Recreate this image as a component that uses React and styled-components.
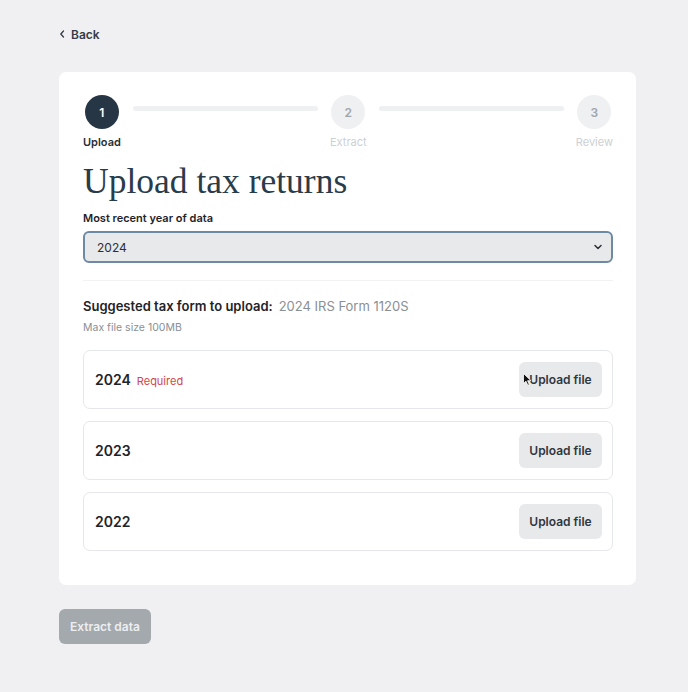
import React from "react";
import styled, { createGlobalStyle } from "styled-components";

const Global = createGlobalStyle`
  html, body { margin: 0; padding: 0; background: #f0f0f2; }
  body { font-family: Inter, "Noto Sans", sans-serif; color: #2b2f36; -webkit-font-smoothing: antialiased; }
  * { box-sizing: border-box; }
`;

const Page = styled.div`
  width: 688px;
  min-height: 692px;
  padding: 27px 52px 40px 59px;
  display: flex;
  flex-direction: column;
`;

const BackLink = styled.a`
  display: flex;
  align-items: center;
  gap: 6px;
  height: 14px;
  font-size: 12px;
  font-weight: 600;
  color: #333b45;
  text-decoration: none;
  cursor: pointer;
`;

const Card = styled.section`
  margin-top: 31px;
  background: #ffffff;
  border-radius: 7px;
  padding: 23px 23px 34px 24px;
  display: flex;
  flex-direction: column;
`;

const Stepper = styled.div`
  display: grid;
  grid-template-columns: auto 1fr auto 1fr auto;
  align-items: start;
`;

const Step = styled.div`
  display: flex;
  flex-direction: column;
  align-items: center;
  min-width: 37px;
`;

const Circle = styled.div`
  width: 34px;
  height: 34px;
  border-radius: 50%;
  display: flex;
  align-items: center;
  justify-content: center;
  font-size: 12px;
  font-weight: 600;
  background: ${(p) => (p.$active ? "#263645" : "#eff0f2")};
  color: ${(p) => (p.$active ? "#ffffff" : "#a0a5ac")};
`;

const StepLabel = styled.div`
  margin-top: 6px;
  font-size: 11px;
  line-height: 14px;
  font-weight: ${(p) => (p.$active ? 600 : 400)};
  color: ${(p) => (p.$active ? "#2b2f36" : "#cdd0d4")};
`;

const Line = styled.div`
  height: 5px;
  border-radius: 3px;
  background: #eff0f2;
  margin: 11px 12px 0 12px;
`;

const Title = styled.h1`
  margin: 11px 0 0 0;
  font-family: "Liberation Serif", "Times New Roman", serif;
  font-weight: 400;
  font-size: 35.5px;
  line-height: 42px;
  color: #2a3b4a;
`;

const FieldLabel = styled.label`
  margin-top: 9px;
  font-size: 11px;
  line-height: 14px;
  font-weight: 600;
  color: #1f2329;
`;

const Select = styled.div`
  margin-top: 6px;
  height: 32px;
  border: 2px solid #6d8aa3;
  border-radius: 6px;
  background: #e8e9eb;
  display: flex;
  align-items: center;
  justify-content: space-between;
  padding: 0 8px 0 12px;
  font-size: 12px;
  color: #2b2f36;
`;

const Divider = styled.hr`
  margin: 17px 0 0 0;
  border: 0;
  height: 1px;
  background: #f1f2f4;
`;

const Suggest = styled.div`
  margin-top: 16px;
  display: flex;
  align-items: baseline;
  gap: 6px;
  font-size: 13px;
  line-height: 18px;
`;

const SuggestStrong = styled.span`
  font-weight: 600;
  color: #1f2329;
`;

const SuggestValue = styled.span`
  color: #8a8f96;
`;

const Hint = styled.div`
  margin-top: 6px;
  font-size: 10.5px;
  line-height: 14px;
  color: #8a8f96;
`;

const Rows = styled.div`
  margin-top: 15px;
  display: flex;
  flex-direction: column;
  gap: 12px;
`;

const Row = styled.div`
  height: 59px;
  border: 1px solid #e6e7ea;
  border-radius: 7px;
  display: flex;
  align-items: center;
  justify-content: space-between;
  padding: 0 10px 0 11px;
`;

const Year = styled.div`
  display: flex;
  align-items: baseline;
  gap: 6px;
  font-size: 14px;
  font-weight: 600;
  color: #1f2329;
`;

const Required = styled.span`
  font-size: 11px;
  font-weight: 400;
  color: #d0464a;
`;

const UploadButton = styled.button`
  position: relative;
  width: 83px;
  height: 35px;
  border: 0;
  border-radius: 6px;
  background: #e8e9eb;
  font-family: inherit;
  font-size: 12px;
  font-weight: 600;
  color: #2f3740;
  cursor: pointer;
`;

const Pointer = styled.svg`
  position: absolute;
  left: 4px;
  top: 11px;
  width: 9px;
  height: 13px;
`;

const ExtractButton = styled.button`
  margin-top: 24px;
  align-self: flex-start;
  width: 92px;
  height: 35px;
  border: 0;
  border-radius: 6px;
  background: #a4a9ae;
  color: #eceef0;
  font-family: inherit;
  font-size: 12px;
  font-weight: 600;
`;

const steps = [
  { n: 1, label: "Upload", active: true },
  { n: 2, label: "Extract" },
  { n: 3, label: "Review" },
];

const years = [
  { year: "2024", required: true, pointer: true },
  { year: "2023" },
  { year: "2022" },
];

export default function App() {
  return (
    <>
      <Global />
      <Page>
        <BackLink>
          <svg width="6" height="8" viewBox="0 0 6 8">
            <path d="M4.5 1 L1.8 4 L4.5 7" fill="none" stroke="#333b45" strokeWidth="1.3" strokeLinecap="round" strokeLinejoin="round" />
          </svg>
          Back
        </BackLink>
        <Card>
          <Stepper>
            {steps.map((s, i) => (
              <React.Fragment key={s.n}>
                {i > 0 && <Line />}
                <Step>
                  <Circle $active={s.active}>{s.n}</Circle>
                  <StepLabel $active={s.active}>{s.label}</StepLabel>
                </Step>
              </React.Fragment>
            ))}
          </Stepper>
          <Title>Upload tax returns</Title>
          <FieldLabel>Most recent year of data</FieldLabel>
          <Select>
            <span>2024</span>
            <svg width="10" height="8" viewBox="0 0 10 8">
              <path d="M2 2.5 L5 5.5 L8 2.5" fill="none" stroke="#2b2f36" strokeWidth="1.5" strokeLinecap="round" strokeLinejoin="round" />
            </svg>
          </Select>
          <Divider />
          <Suggest>
            <SuggestStrong>Suggested tax form to upload:</SuggestStrong>
            <SuggestValue>2024 IRS Form 1120S</SuggestValue>
          </Suggest>
          <Hint>Max file size 100MB</Hint>
          <Rows>
            {years.map((y) => (
              <Row key={y.year}>
                <Year>
                  {y.year}
                  {y.required && <Required>Required</Required>}
                </Year>
                <UploadButton>
                  Upload file
                  {y.pointer && (
                    <Pointer viewBox="0 0 9 13">
                      <path d="M0.5 0.5 L0.5 10.5 L3 8.2 L4.8 12.3 L6.3 11.6 L4.6 7.7 L8 7.7 Z" fill="#111" stroke="#fff" strokeWidth="0.8" strokeLinejoin="round" />
                    </Pointer>
                  )}
                </UploadButton>
              </Row>
            ))}
          </Rows>
        </Card>
        <ExtractButton>Extract data</ExtractButton>
      </Page>
    </>
  );
}
